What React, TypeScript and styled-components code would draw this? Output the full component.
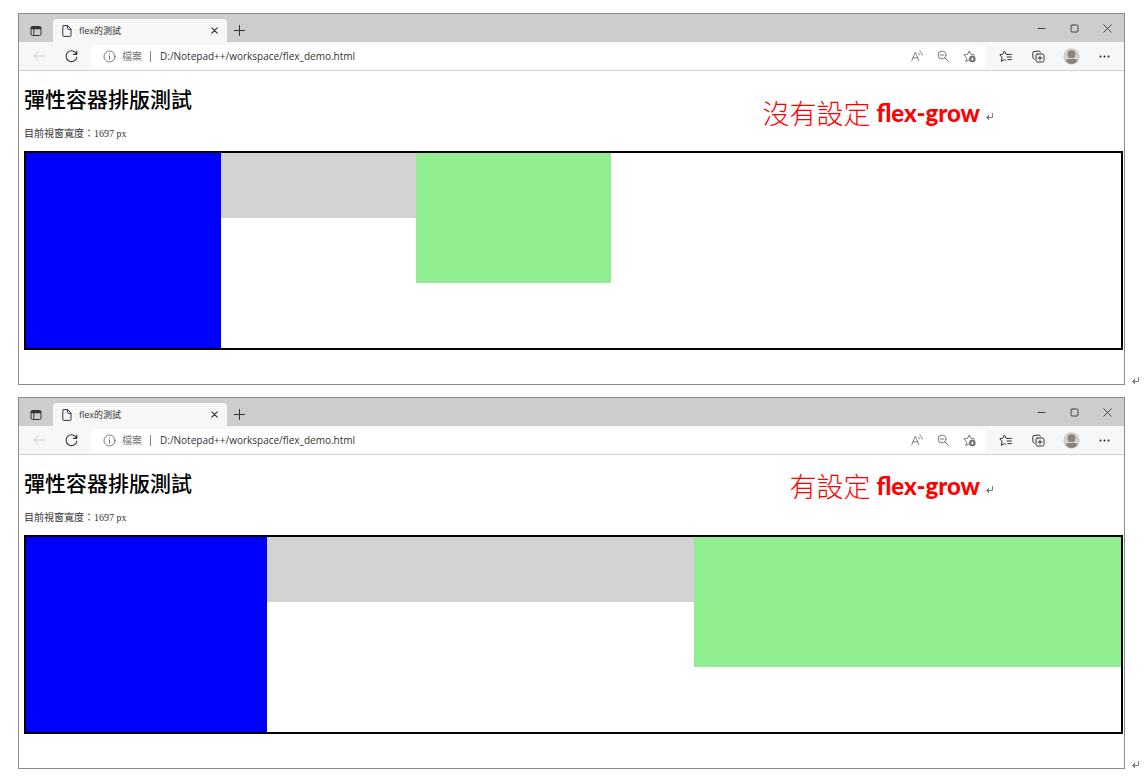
import React from "react";
import styled, { createGlobalStyle } from "styled-components";

const uiFont = `"Open Sans", "Noto Sans CJK TC", sans-serif`;

const GlobalStyle = createGlobalStyle`
  *, *::before, *::after { box-sizing: border-box; }
  body { margin: 0; background: #fff; color: #000; }
  h1, h2, p, figure { margin: 0; }
`;

const Document = styled.main`
  display: flex;
  flex-direction: column;
  gap: 12px;
  padding: 13px 6px 14px 18px;
`;

const Figure = styled.figure`
  position: relative;
  display: flex;
  align-items: flex-end;
  gap: 7px;
`;

const BrowserWindow = styled.section`
  flex: 1;
  min-width: 0;
  border: 1px solid #8c8c8c;
  background: #fff;
`;

const IconButton = styled.button<{ $width: number; $color?: string }>`
  display: flex;
  flex: none;
  align-items: center;
  justify-content: center;
  width: ${(p) => p.$width}px;
  height: 23px;
  padding: 0;
  border: 0;
  background: none;
  color: ${(p) => p.$color ?? "#333"};
`;

const TitleBar = styled.header`
  display: flex;
  align-items: flex-end;
  height: 28px;
  background: #cdcdcd;
`;

const Tab = styled.div`
  display: flex;
  align-items: center;
  gap: 6px;
  width: 174px;
  height: 23px;
  padding-left: 8px;
  border-radius: 4px 4px 0 0;
  background: #f7f7f7;
  color: #333;
`;

const TabTitle = styled.span`
  flex: 1;
  font: 9px/12px ${uiFont};
`;

const WindowControls = styled.div`
  display: flex;
  align-self: center;
  margin-left: auto;
`;

const Toolbar = styled.div`
  display: flex;
  align-items: center;
  height: 29px;
  padding: 0 3px 0 4px;
  border-bottom: 1px solid #d2d2d2;
  background: #f7f7f7;
`;

const AddressBar = styled.div`
  display: flex;
  flex: 1;
  align-items: center;
  height: 23px;
  margin: 0 3px 0 4px;
  padding: 0 4px 0 12px;
  border-radius: 4px;
  background: #fff;
  color: #767676;
`;

const AddressLabel = styled.label`
  margin: 0 8px 0 6px;
  font: 10px/14px ${uiFont};
`;

const Divider = styled.span`
  width: 1px;
  height: 11px;
  margin-right: 9px;
  background: #858585;
`;

const AddressInput = styled.input`
  flex: 1;
  min-width: 0;
  height: 16px;
  padding: 0;
  border: 0;
  outline: 0;
  background: none;
  color: #333;
  font: 10px/16px ${uiFont};
`;

const Page = styled.div`
  padding: 13px 1px 34px 5px;
`;

const Heading = styled.h1`
  font: 500 21px/28px "Noto Sans CJK TC", sans-serif;
`;

const WidthNote = styled.p`
  margin: 14px 0 9px;
  color: #333;
  font: 10px/16px "Liberation Serif", "Noto Sans CJK TC", serif;
`;

const FlexContainer = styled.div`
  display: flex;
  align-items: flex-start;
  border: 2px solid #000;
`;

const Box = styled.div<{ $color: string; $height: number; $grow: number }>`
  flex: ${(p) => p.$grow} 0 195px;
  height: ${(p) => p.$height}px;
  background: ${(p) => p.$color};
`;

const Caption = styled.figcaption<{ $top: number }>`
  position: absolute;
  top: ${(p) => p.$top}px;
  right: 146px;
  display: flex;
  align-items: center;
  gap: 6px;
  color: #f00;
  font: 300 27px/36px "Noto Sans CJK TC", sans-serif;

  strong {
    font: 900 24px/36px Lato, sans-serif;
  }

  svg {
    position: relative;
    top: 4px;
  }
`;

const Icon = ({ size, box = 16, width = 1, children }: {
  size: number; box?: number; width?: number; children: React.ReactNode;
}) => (
  <svg width={size} height={size} viewBox={`0 0 ${box} ${box}`} fill="none" stroke="currentColor"
    strokeWidth={width} strokeLinecap="round" strokeLinejoin="round" aria-hidden="true">
    {children}
  </svg>
);

const ReturnMark = () => (
  <svg width="8" height="8" viewBox="0 0 8 8" fill="none" stroke="#808080" aria-hidden="true">
    <path d="M6.5 0v4.5H0M2.5 2v5M1.5 3v3" />
  </svg>
);

type Grow = [number, number, number];

function Browser({ id, grow }: { id: string; grow: Grow }) {
  return (
    <BrowserWindow>
      <TitleBar>
        <IconButton $width={34} aria-label="Tab actions">
          <Icon size={12} box={12}>
            <rect x="1" y="1.5" width="10" height="9" rx="1.5" />
            <path d="M1.5 2.5h9M1.5 3.5h9" strokeWidth="1.6" />
            <path d="M3.8 4v6" />
          </Icon>
        </IconButton>
        <Tab>
          <Icon size={12} box={12}>
            <path d="M2.6.6h4L10 4v6.4q0 1-1 1H2.8q-1 0-1-1V1.5q0-.9.8-.9ZM6.4.8v2.5q0 1 1 1h2.4" />
          </Icon>
          <TabTitle>flex的測試</TabTitle>
          <IconButton $width={26} aria-label="Close tab">
            <Icon size={7} box={7} width={1.2}><path d="m.8.8 5.4 5.4M6.2.8.8 6.2" /></Icon>
          </IconButton>
        </Tab>
        <IconButton $width={24} aria-label="New tab">
          <Icon size={11} box={11}><path d="M5.5.5v10M.5 5.5h10" /></Icon>
        </IconButton>
        <WindowControls>
          <IconButton $width={33} $color="#444" aria-label="Minimize">
            <Icon size={9} box={9}><path d="M1 4.5h7" /></Icon>
          </IconButton>
          <IconButton $width={33} $color="#444" aria-label="Maximize">
            <Icon size={9} box={9}><rect x="1" y="1" width="7" height="7" rx="1" /></Icon>
          </IconButton>
          <IconButton $width={33} $color="#444" aria-label="Close">
            <Icon size={9} box={9}><path d="m.8.8 7.4 7.4M8.2.8.8 8.2" /></Icon>
          </IconButton>
        </WindowControls>
      </TitleBar>
      <Toolbar>
        <IconButton $width={32} $color="#cfcfcf" aria-label="Back">
          <Icon size={12} box={12}><path d="M11.4 6H.8M5.4 1.2.6 6l4.8 4.8" /></Icon>
        </IconButton>
        <IconButton $width={32} aria-label="Refresh">
          <Icon size={13} box={13}>
            <path d="M11.6 4.3A5.4 5.4 0 1 0 11.9 7M11.8 1v3.4H8.4" strokeWidth="1.1" />
          </Icon>
        </IconButton>
        <AddressBar>
          <Icon size={13} box={13}>
            <circle cx="6.5" cy="6.5" r="5.5" />
            <path d="M6.5 5.8v3.4M6.5 3.7v.1" />
          </Icon>
          <AddressLabel htmlFor={id}>檔案</AddressLabel>
          <Divider />
          <AddressInput id={id} defaultValue="D:/Notepad++/workspace/flex_demo.html" spellCheck={false} />
          <IconButton $width={26} $color="#777" aria-label="Read aloud">
            <Icon size={12} box={12} width={0.9}>
              <path d="M.8 10.8 4.3 2l3.5 8.8M2 7.8h4.6M7.4 2.6q1 .8 1 2.2M8.8 1q2.4 1.4 2.4 4" />
            </Icon>
          </IconButton>
          <IconButton $width={26} $color="#777" aria-label="Zoom out">
            <Icon size={12} box={12}>
              <circle cx="5" cy="5" r="3.9" />
              <path d="m7.9 7.9 3.3 3.3M3.2 5h3.6" />
            </Icon>
          </IconButton>
          <IconButton $width={26} $color="#666" aria-label="Add to favorites">
            <Icon size={13} box={13} width={0.9}>
              <path d="M11.4 4.9 8 4.4 6.2 1 4.5 4.4.8 5l2.7 2.7-.6 3.8 2.6-1.4" />
              <circle cx="9.3" cy="9" r="3.3" fill="currentColor" stroke="none" />
              <path d="M7.7 9h3.2M9.3 7.4v3.2" stroke="#fff" strokeWidth="0.8" />
            </Icon>
          </IconButton>
        </AddressBar>
        <IconButton $width={33} aria-label="Favorites">
          <Icon size={13} box={13}>
            <path d="M8.6 4.4 7 4.2 5.4 1 3.8 4.2.8 4.8 3 7.3l-.6 4 3-1.6 1 .5M8.8 4.4h3.6M8 7h4.4M8.8 9.6h3.6" />
          </Icon>
        </IconButton>
        <IconButton $width={33} aria-label="Collections">
          <Icon size={13} box={13}>
            <rect x="4" y="4" width="8" height="8" rx="1.5" />
            <path d="M8 6v4M6 8h4M2.2 9.2Q1 8.8.9 7.4L.7 3.2Q.7 1.8 2 1.6L6.8 1q1.4 0 1.9 1.2" />
          </Icon>
        </IconButton>
        <IconButton $width={33} aria-label="Profile">
          <svg width="17" height="17" viewBox="0 0 17 17" aria-hidden="true">
            <circle cx="8.5" cy="8.5" r="8.3" fill="#d2d0ce" />
            <circle cx="8.5" cy="6.2" r="3.9" fill="#87837f" />
            <path d="M3 12.8q0-1.8 2-1.8h7q2 0 2 1.8-1.8 3.2-5.5 3.2T3 12.8Z" fill="#87837f" />
          </svg>
        </IconButton>
        <IconButton $width={33} aria-label="Settings and more">
          <svg width="11" height="3" viewBox="0 0 11 3" fill="#222" aria-hidden="true">
            <circle cx="1.5" cy="1.5" r="1" />
            <circle cx="5.5" cy="1.5" r="1" />
            <circle cx="9.5" cy="1.5" r="1" />
          </svg>
        </IconButton>
      </Toolbar>
      <Page>
        <Heading>彈性容器排版測試</Heading>
        <WidthNote>目前視窗寬度：1697 px</WidthNote>
        <FlexContainer>
          <Box $color="blue" $height={195} $grow={grow[0]} />
          <Box $color="lightgray" $height={65} $grow={grow[1]} />
          <Box $color="lightgreen" $height={130} $grow={grow[2]} />
        </FlexContainer>
      </Page>
    </BrowserWindow>
  );
}

const examples: { id: string; title: string; top: number; grow: Grow }[] = [
  { id: "address-without-grow", title: "沒有設定", top: 82, grow: [0, 0, 0] },
  { id: "address-with-grow", title: "有設定", top: 71, grow: [1, 5, 5] },
];

export default function App() {
  return (
    <>
      <GlobalStyle />
      <Document>
        {examples.map(({ id, title, top, grow }) => (
          <Figure key={id}>
            <Browser id={id} grow={grow} />
            <ReturnMark />
            <Caption $top={top}>
              <span>{title}</span>
              <strong>flex-grow</strong>
              <ReturnMark />
            </Caption>
          </Figure>
        ))}
      </Document>
    </>
  );
}
